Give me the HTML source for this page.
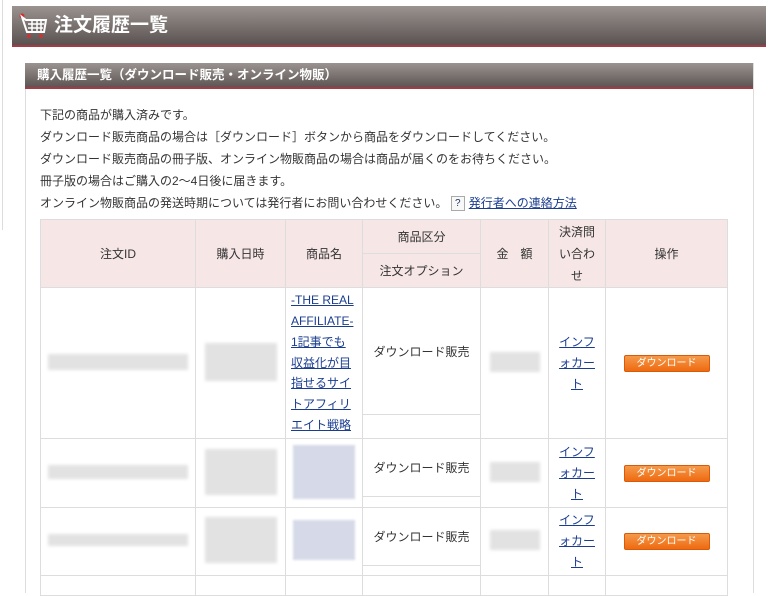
<!DOCTYPE html>
<html><head><meta charset="utf-8"><style>
*{margin:0;padding:0;box-sizing:border-box}
body{width:783px;height:582px;overflow:hidden;background:#fff;font-family:"Liberation Sans","Noto Sans CJK JP",sans-serif;font-size:12px;color:#333;position:relative}
.lb{position:absolute;left:2px;top:0;height:230px;border-left:1px solid #ddd}
.h1{position:absolute;left:12px;top:6px;width:754px;height:39px;background:linear-gradient(#9a9390,#5a5250);color:#fff;font-size:19px;font-weight:bold;line-height:39px;padding-left:42px}
.h1r{position:absolute;left:12px;top:45px;width:754px;height:2px;background:#a33a44}
.box{position:absolute;left:25px;top:63px;width:729px;height:530px;border-left:1px solid #ddd;border-right:1px solid #ddd}
.h2{position:absolute;left:25px;top:63px;width:728px;height:24px;background:linear-gradient(#9a9390,#5d5553);color:#fff;font-size:12.5px;font-weight:bold;line-height:24px;padding-left:12px}
.h2r{position:absolute;left:25px;top:87px;width:728px;height:2px;background:#a33a44}
.txt{position:absolute;left:40px;top:104px;line-height:22px;font-size:12px;color:#333}
a{color:#1a3d8f;text-decoration:underline}
table{position:absolute;left:40px;top:219px;border-collapse:collapse;width:688px}
td,th{border:1px solid #ddd;text-align:center;font-weight:normal;font-size:12px;color:#333;vertical-align:middle}
th{background:#f6e6e6}
.btn{display:inline-block;width:86px;height:17px;background:linear-gradient(#f59a4a,#ee6a10);border:1px solid #d85a0a;border-radius:2px;color:#fff;font-size:10px;line-height:15px}
.bl{display:inline-block;background:#e2e2e2;filter:blur(1.5px)}
.bb{display:inline-block;background:#d6dae8;filter:blur(1px)}
.q{display:inline-block;width:14px;height:15px;border:1px solid #aaa;font-size:10px;line-height:13px;text-align:center;color:#236;vertical-align:middle;margin-right:4px;background:#f8f8f8}
</style></head><body>
<div class="lb"></div>
<div class="h1">注文履歴一覧
<svg style="position:absolute;left:6px;top:6px" width="32" height="28" viewBox="0 0 32 28"><circle cx="4" cy="4" r="2.5" fill="#c33"/><path d="M4 5 L8 8 L28 8 L26 20 L9 20 Z" fill="none" stroke="#fff" stroke-width="2"/><path d="M10 12H26M10 16H25M14 8V20M19 8V20M23 8V20" stroke="#fff" stroke-width="1.5"/><circle cx="11" cy="24" r="2" fill="#c33"/><circle cx="23" cy="24" r="2" fill="#c33"/></svg></div>
<div class="h1r"></div>
<div class="box"></div>
<div class="h2">購入履歴一覧（ダウンロード販売・オンライン物販）</div>
<div class="h2r"></div>
<div class="txt">下記の商品が購入済みです。<br>ダウンロード販売商品の場合は［ダウンロード］ボタンから商品をダウンロードしてください。<br>ダウンロード販売商品の冊子版、オンライン物販商品の場合は商品が届くのをお待ちください。<br>冊子版の場合はご購入の2～4日後に届きます。<br>オンライン物販商品の発送時期については発行者にお問い合わせください。 <span class="q">?</span><a>発行者への連絡方法</a></div>
<table>
<tr style="height:34px"><th rowspan="2" style="width:155px">注文ID</th><th rowspan="2" style="width:90px">購入日時</th><th rowspan="2" style="width:77px">商品名</th><th style="width:118px">商品区分</th><th rowspan="2" style="width:68px">金　額</th><th rowspan="2" style="width:57px;line-height:22px">決済問<br>い合わ<br>せ</th><th rowspan="2">操作</th></tr>
<tr style="height:34px"><th>注文オプション</th></tr>
<tr style="height:127px"><td rowspan="2"><span class="bl" style="width:140px;height:16px"></span></td><td rowspan="2"><span class="bl" style="width:72px;height:38px"></span></td><td rowspan="2" style="line-height:20.8px;text-align:left;padding-left:5px"><a>-THE REAL<br>AFFILIATE-<br>1記事でも<br>収益化が目<br>指せるサイ<br>トアフィリ<br>エイト戦略</a></td><td>ダウンロード販売</td><td rowspan="2"><span class="bl" style="width:50px;height:20px"></span></td><td rowspan="2" style="line-height:21px"><a>インフ<br>ォカー<br>ト</a></td><td rowspan="2"><span class="btn">ダウンロード</span></td></tr>
<tr style="height:24px"><td></td></tr>
<tr style="height:58px"><td rowspan="2"><span class="bl" style="width:140px;height:14px"></span></td><td rowspan="2"><span class="bl" style="width:72px;height:46px"></span></td><td rowspan="2"><span class="bb" style="width:62px;height:54px"></span></td><td>ダウンロード販売</td><td rowspan="2"><span class="bl" style="width:50px;height:20px"></span></td><td rowspan="2" style="line-height:21px"><a>インフ<br>ォカー<br>ト</a></td><td rowspan="2"><span class="btn">ダウンロード</span></td></tr>
<tr style="height:11px"><td></td></tr>
<tr style="height:58px"><td rowspan="2"><span class="bl" style="width:140px;height:12px"></span></td><td rowspan="2"><span class="bl" style="width:72px;height:46px"></span></td><td rowspan="2"><span class="bb" style="width:62px;height:40px"></span></td><td>ダウンロード販売</td><td rowspan="2"><span class="bl" style="width:50px;height:20px"></span></td><td rowspan="2" style="line-height:21px"><a>インフ<br>ォカー<br>ト</a></td><td rowspan="2"><span class="btn">ダウンロード</span></td></tr>
<tr style="height:10px"><td></td></tr>
<tr style="height:20px"><td></td><td></td><td></td><td></td><td></td><td></td><td></td></tr>
</table>
</body></html>
